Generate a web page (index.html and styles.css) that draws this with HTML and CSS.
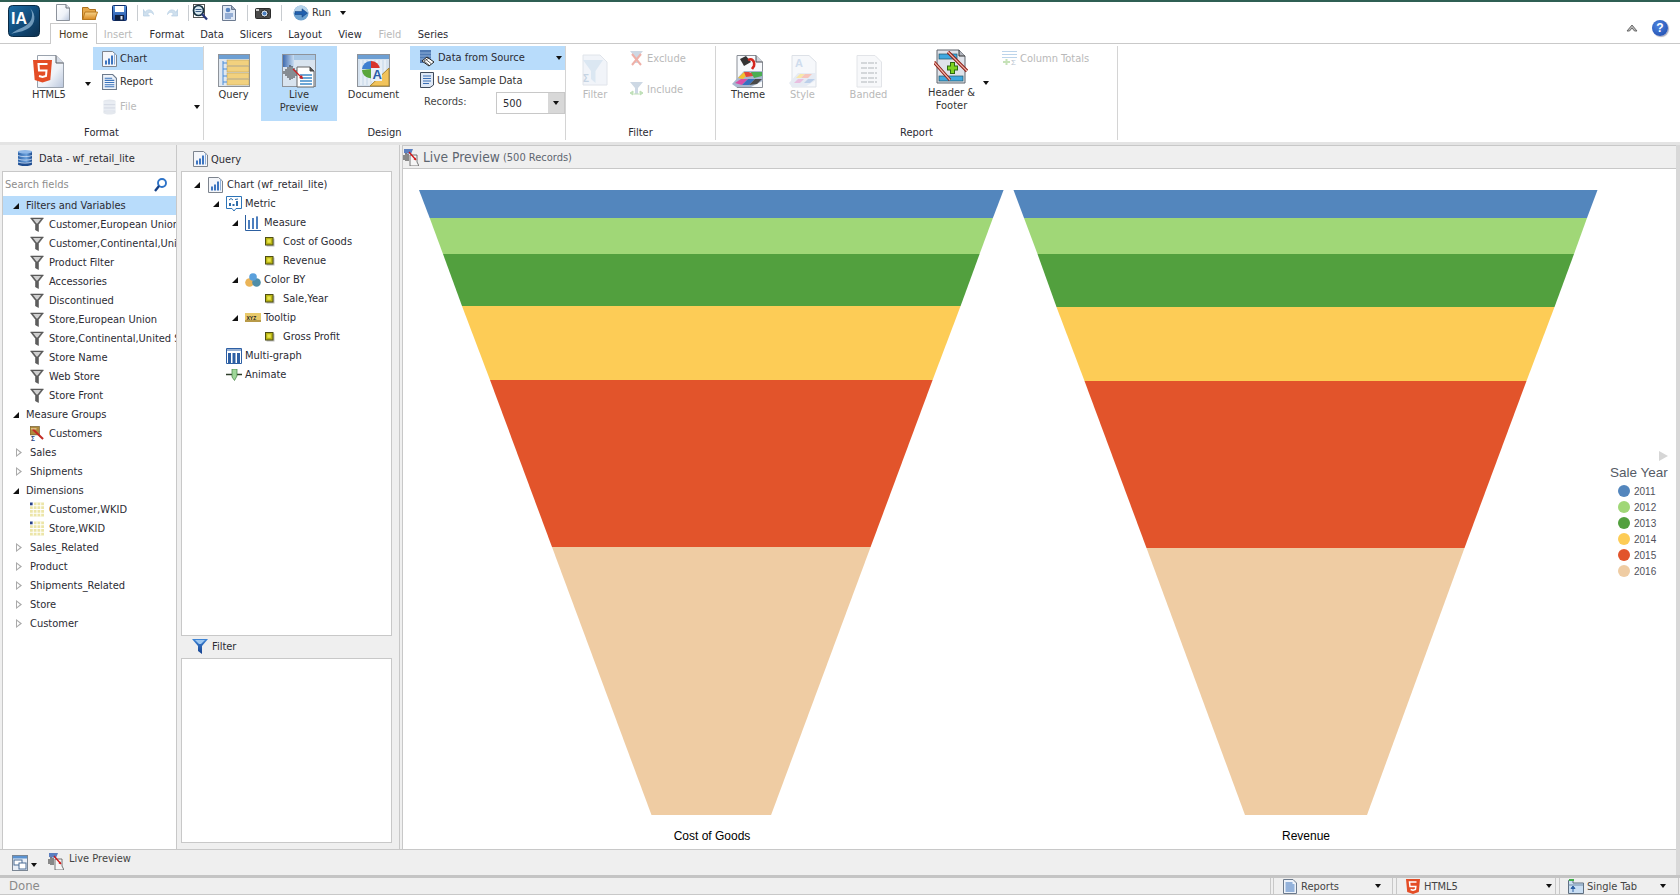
FILE: index.html
```html
<!DOCTYPE html>
<html lang="en">
<head>
<meta charset="utf-8">
<title>InfoAssist Live Preview</title>
<link rel="stylesheet" href="styles.css">
</head>
<body>
<svg class="defs" width="0" height="0" aria-hidden="true">
  <defs>
    <linearGradient id="gPage" x1="0" y1="0" x2="1" y2="1"><stop offset="0" stop-color="#fff"/><stop offset=".6" stop-color="#eef2f8"/><stop offset="1" stop-color="#b9c6dc"/></linearGradient>
    <linearGradient id="gLogo" x1="0" y1="0" x2="1" y2="1"><stop offset="0" stop-color="#1d6fa8"/><stop offset=".55" stop-color="#114a78"/><stop offset="1" stop-color="#0c2f4e"/></linearGradient>
    <linearGradient id="gFolder" x1="0" y1="0" x2="0" y2="1"><stop offset="0" stop-color="#f8d48c"/><stop offset="1" stop-color="#d98a22"/></linearGradient>
    <linearGradient id="gBlue" x1="0" y1="0" x2="0" y2="1"><stop offset="0" stop-color="#5c9ae0"/><stop offset="1" stop-color="#1c4aa0"/></linearGradient>
    <linearGradient id="gDb" x1="0" y1="0" x2="1" y2="0"><stop offset="0" stop-color="#2b62a8"/><stop offset=".6" stop-color="#6aa0dc"/><stop offset="1" stop-color="#1f4d90"/></linearGradient>
    <linearGradient id="gHead" x1="0" y1="0" x2="1" y2="0"><stop offset="0" stop-color="#3f6cb0"/><stop offset="1" stop-color="#c8ddf2"/></linearGradient>
    <linearGradient id="gFun" x1="0" y1="0" x2="0" y2="1"><stop offset="0" stop-color="#3f86d8"/><stop offset="1" stop-color="#15408e"/></linearGradient>

    <symbol id="i-new" viewBox="0 0 14 17"><path d="M.5.5H10L13.5 4V16.5H.5Z" fill="url(#gPage)" stroke="#8d939c"/><path d="M10 .5V4H13.5" fill="#dfe5ee" stroke="#6c7079"/></symbol>
    <symbol id="i-open" viewBox="0 0 16 17"><path d="M.5 3.5H6L7.5 5.5H13.5V15.5H.5Z" fill="#e6a84a" stroke="#ad6f1c"/><path d="M.8 15.5 3 8H15.5L13 15.5Z" fill="url(#gFolder)" stroke="#b9791f"/></symbol>
    <symbol id="i-save" viewBox="0 0 15 16"><rect x=".5" y=".5" width="14" height="15" rx="1" fill="url(#gBlue)" stroke="#0f2d6b"/><rect x="3" y="1" width="9" height="6" fill="#fff"/><rect x="3" y="10" width="9" height="5.5" fill="#10203f"/><rect x="8.500" y="11" width="2" height="3.5" fill="#dfe6f2"/></symbol>
    <symbol id="i-undo" viewBox="0 0 13 13"><path d="M3 6.500C5 2.500 11 3 11.500 8.500 10 6 7 5.500 5.500 8L7.500 10H1.500V3.500Z" fill="#cfe0ee" stroke="#b5cde2" stroke-width=".7"/></symbol>
    <symbol id="i-redo" viewBox="0 0 13 13"><path d="M10 6.500C8 2.500 2 3 1.500 8.500 3 6 6 5.500 7.500 8L5.500 10H11.500V3.500Z" fill="#cfe0ee" stroke="#b5cde2" stroke-width=".7"/></symbol>
    <symbol id="i-search" viewBox="0 0 16 17"><rect x="1.500" y=".5" width="11" height="13" fill="#fff" stroke="#555"/><circle cx="6.500" cy="6.500" r="5" fill="#d8e8f0" stroke="#14303f" stroke-width="1.700"/><path d="M3.500 5.500H9.500M3.500 7.500H9.500" stroke="#3c5f8a"/><path d="M10 10 15 15.500" stroke="#26367c" stroke-width="2.200"/></symbol>
    <symbol id="i-report" viewBox="0 0 14 16"><path d="M.5.5H9.500L13.500 4.500V15.500H.5Z" fill="#dfe8f5" stroke="#6c7a90"/><path d="M9.500.5V4.500H13.500" fill="#9aa8bc" stroke="#6c7a90"/><circle cx="6" cy="5" r="2.300" fill="#5b87c4"/><path d="M3 9H11M3 11H11M3 13H9" stroke="#4a74b4"/></symbol>
    <symbol id="i-camera" viewBox="0 0 16 12"><rect x=".5" y="1.500" width="15" height="10" rx="1" fill="#4a4a4a" stroke="#2b2b2b"/><rect x="1" y="2" width="3" height="2" fill="#d0d0d0"/><circle cx="9.500" cy="6.500" r="3.500" fill="#e6eef5" stroke="#222"/><circle cx="9.500" cy="6.500" r="2" fill="#4b7fc0"/></symbol>
    <symbol id="i-run" viewBox="0 0 16 16"><circle cx="8" cy="8" r="7.500" fill="#6aa0cf"/><path d="M8 .5A7.500 7.500 0 0 1 15.500 8H.5A7.500 7.500 0 0 1 8 .5Z" fill="#b6d3ea"/><path d="M2 6.500H9V3.800L14.500 8 9 12.200V9.500H2Z" fill="#1f5fae" stroke="#103d7a" stroke-width=".5"/></symbol>
    <symbol id="i-collapse" viewBox="0 0 12 10"><path d="M1 8 6 2 11 8 8.500 8 6 5 3.500 8Z" fill="#b9b9b9" stroke="#5d5d5d" stroke-width=".9"/></symbol>

    <symbol id="i-html5" viewBox="0 0 32 34"><path d="M4.500 1.500H23L30.500 9V33.500H4.500Z" fill="url(#gPage)" stroke="#9aa2ad"/><path d="M23 1.500V9H30.500" fill="#d6dce6" stroke="#55585f"/><path d="M0 6H19L17.300 26 9.500 28.500 1.700 26Z" fill="#e44d26"/><path d="M14.500 10H5.500L6 16.500H13.500L13 22 9.500 23 6 22" fill="none" stroke="#fff" stroke-width="2"/></symbol>
    <symbol id="i-chart" viewBox="0 0 15 16"><path d="M.5.5H10.500L14.500 4V15.500H.5Z" fill="#f4f6fa" stroke="#7d848e"/><path d="M3 9.500H5V13.500H3ZM6 7.500H8V13.500H6ZM9 4.500H11V13.500H9Z" fill="#3d75c0"/><path d="M12 2.500H13V13.500H12Z" fill="#8fb1dc"/></symbol>
    <symbol id="i-file" viewBox="0 0 14 17"><ellipse cx="7" cy="2.500" rx="6.500" ry="2" fill="#e4e8ee"/><rect x=".5" y="2.500" width="13" height="12" fill="#e9edf3"/><path d="M1 6H13M1 9.500H13M1 13H13" stroke="#d2d8e2"/><ellipse cx="7" cy="14.500" rx="6.500" ry="2" fill="#e4e8ee"/></symbol>
    <symbol id="i-query" viewBox="0 0 32 34"><rect x=".5" y=".5" width="31" height="32" fill="#dfe7f0" stroke="#8e939a"/><rect x="1" y="1" width="30" height="4" fill="#6d9fd3"/><rect x="9" y="6" width="22" height="5.500" fill="#f2d17e" stroke="#b59a58" stroke-width=".5"/><rect x="9" y="12.500" width="22" height="5.500" fill="#f2d17e" stroke="#b59a58" stroke-width=".5"/><rect x="9" y="19" width="22" height="5.500" fill="#f2d17e" stroke="#b59a58" stroke-width=".5"/><rect x="9" y="25.500" width="22" height="5.500" fill="#f2d17e" stroke="#b59a58" stroke-width=".5"/><path d="M5 7V31M5 9H9M5 15H9M5 22H9M5 28H9" stroke="#4a8dd8" fill="none"/></symbol>
    <symbol id="i-live" viewBox="0 0 34 34"><rect x=".5" y=".5" width="33" height="32" fill="#d9e4ef" stroke="#8e939a"/><rect x="1" y="1" width="32" height="5" fill="#a8c8e6"/><rect x="1" y="1" width="11" height="12" fill="url(#gHead)"/><path d="M2 17V20M4 15V22M6 13V24M8 11V26M10 12V25M12 14V24M14 16V22" stroke="#222" stroke-width=".9"/><path d="M15 13H28L32 17V33H15Z" fill="#fff" stroke="#666"/><path d="M28 13V17H32" fill="#555" stroke="#444"/><path d="M18 21H30M18 24H30M18 27H30M18 30H30" stroke="#3d89c8" stroke-width="1.500"/><path d="M11 15 20 24" stroke="#d02020" stroke-width="1.300"/><path d="M21 25 17 24 20 21Z" fill="#d02020"/></symbol>
    <symbol id="i-document" viewBox="0 0 33 34"><rect x=".5" y=".5" width="32" height="32" fill="#d5e2ef" stroke="#8e939a"/><rect x="1" y="1" width="31" height="4" fill="#6d9fd3"/><path d="M4 6V31M8 6V31M12 6V31M16 6V31M20 6V31M24 6V31M28 6V31" stroke="#e6eef6" stroke-width="2"/><path d="M14 15V7A9 9 0 0 1 23 15Z" fill="#d8342b"/><path d="M14 15H23A9 9 0 0 1 16 24Z" fill="#e8b73a"/><path d="M14 15 16 24A9 9 0 0 1 5 16Z" fill="#5aa63c"/><path d="M14 15H5A9 9 0 0 1 14 7Z" fill="#3f7fd0"/><path d="M13 32 32 14V32Z" fill="#f1c35b" stroke="#a8842f"/><rect x="14" y="14" width="11" height="13" fill="#e8f0f8"/><text x="15.500" y="25" class="svg-a">A</text></symbol>
    <symbol id="i-source" viewBox="0 0 16 18"><rect x="1" y="1" width="11" height="13" fill="#4f7bb5"/><path d="M1 4H12M1 7H12M1 10H12" stroke="#8fb0d8"/><path d="M3 12 8 8 15 13 10 17Z" fill="#fff" stroke="#222"/><path d="M5 12 10 16M7 10.500 12 14.500M5 12 10 9" stroke="#222" stroke-width=".7"/></symbol>
    <symbol id="i-sample" viewBox="0 0 14 16"><path d="M.5.5H13.500V13L10 15.500H.5Z" fill="#dfe8f5" stroke="#3f4a5a"/><path d="M3 4H11M3 6.500H11M3 9H11M3 11.500H9" stroke="#3b6fb5" stroke-width="1.100"/></symbol>
    <symbol id="i-filter-big" viewBox="0 0 28 34"><path d="M2 1H19L26 8V31H2Z" fill="#f1f4f9" stroke="#e0e4ea"/><path d="M2 6H22L14.500 17V29L10 25V17Z" fill="#dbe7f2"/><text x="2" y="28" class="svg-sigma">Σ</text></symbol>
    <symbol id="i-exclude" viewBox="0 0 15 16"><path d="M1 1H14L9 7V13H6V7Z" fill="#cdd8e4"/><path d="M3 4 12 15M12 4 3 15" stroke="#efb0a8" stroke-width="2"/></symbol>
    <symbol id="i-include" viewBox="0 0 15 16"><path d="M1 1H14L9 7V13H6V7Z" fill="#cdd8e4"/><path d="M1 12 4 10V14ZM14 12 11 10V14ZM5 13 H10" fill="#bfe0b8" stroke="#bfe0b8"/></symbol>
    <symbol id="i-theme" viewBox="0 0 32 34"><path d="M5 1.500H24L30.500 8V33.500H5Z" fill="#f7f9fc" stroke="#8a8f97"/><path d="M24 1.500V8H30.500" fill="#cfd4dc" stroke="#4a4d52"/><path d="M0 30 12 17H30.500V27L19 33 4 33Z" fill="#a8b8d0"/><path d="M6 24 12 18H18L11 25Z" fill="#f2c230"/><path d="M12 18H18L17 19 24 18 21 22 14 23Z" fill="#e2463c"/><path d="M19 18H30V22L22 24Z" fill="#4bae52"/><path d="M3 29 9 25H16L10 31Z" fill="#d84ea8"/><path d="M10 31 16 25H23L17 31Z" fill="#3670c0"/><path d="M17 31 23 25H30L25 30Z" fill="#4a4a4a"/><path d="M8 5 14 2 19 8 12 12Z" fill="#333"/><path d="M16 6C20 4 23 7 22 12L20 15" fill="none" stroke="#d4271e" stroke-width="2.500"/></symbol>
    <symbol id="i-style" viewBox="0 0 28 34"><path d="M3 1.500H20L27 8V33H3Z" fill="#f6f8fb" stroke="#dde1e7"/><text x="6" y="13" class="svg-style">A</text><path d="M0 29 9 19H27V26L16 33H3Z" fill="#e6ebf3"/><path d="M7 24 11 20H16L12 24Z" fill="#f8e7a8"/><path d="M16 20H23L19 24H12Z" fill="#f6c4bc"/><path d="M5 29 9 25H15L11 29Z" fill="#e8bfe0"/><path d="M15 29 19 25H26L21 29Z" fill="#bdd0ea"/></symbol>
    <symbol id="i-banded" viewBox="0 0 28 34"><path d="M2 1.500H20L26.500 8V33H2Z" fill="#f7f8fa" stroke="#e2e4e8"/><path d="M6 9H22M6 14H22M6 19H22M6 24H22M6 28H22" stroke="#c9ccd0" stroke-width="1.500" stroke-dasharray="6 1"/></symbol>
    <symbol id="i-header" viewBox="0 0 36 37"><path d="M3 1H25L31 7V34H3Z" fill="#dfe3ea" stroke="#5f646c"/><path d="M25 1V7H31" fill="#b0b4bc" stroke="#333"/><rect x="5" y="5" width="18" height="5" fill="#3fa8e0" stroke="#256" stroke-width=".7"/><rect x="5" y="27" width="24" height="5" fill="#3fa8e0" stroke="#256" stroke-width=".7"/><path d="M0 13 16 31M14 3 33 22" stroke="#8b1a14" stroke-width="3.200"/><path d="M0 13 16 31M14 3 33 22" stroke="#f2b6a8" stroke-width="1.200"/><path d="M13 19H24M18.500 13V25" stroke="#2c6b10" stroke-width="5"/><path d="M14 19H23M18.500 14V24" stroke="#7ed321" stroke-width="3"/></symbol>
    <symbol id="i-totals" viewBox="0 0 15 16"><path d="M0 1.500H15M0 4.500H15M0 7.500H15" stroke="#bcd4ea"/><path d="M1 12H8M4.500 9V15" stroke="#c6e2b8" stroke-width="2"/><text x="9" y="15" class="svg-sum">Σ</text></symbol>

    <symbol id="i-db" viewBox="0 0 14 16"><rect y="1.500" width="14" height="13" fill="url(#gDb)"/><ellipse cx="7" cy="1.800" rx="7" ry="1.800" fill="#8fb8e8"/><ellipse cx="7" cy="14.300" rx="7" ry="1.700" fill="#1f4d90"/><path d="M0 5.500C3 7 11 7 14 5.500M0 9C3 10.500 11 10.500 14 9M0 12C3 13.500 11 13.500 14 12" fill="none" stroke="#cfe0f5" stroke-width=".8"/></symbol>
    <symbol id="i-lens" viewBox="0 0 13 14"><circle cx="8" cy="5" r="4" fill="none" stroke="#2d73c8" stroke-width="1.900"/><path d="M5 8 1 13" stroke="#153f85" stroke-width="2.300"/></symbol>
    <symbol id="i-funnel" viewBox="0 0 14 15"><path d="M.5 1H13.500L8.500 7.500V14.500L5.500 13V7.500Z" fill="#5d5d5d" stroke="#4c4c4c" stroke-width=".5"/><path d="M3 2H11L7.500 6.500H6.500Z" fill="#d0d0d0"/></symbol>
    <symbol id="i-customers" viewBox="0 0 15 15"><rect x="0" y="0" width="10" height="9" fill="#b08a3c" stroke="#5c4717" stroke-width=".6"/><path d="M3 3 14 13.500" stroke="#c22a24" stroke-width="2.200"/><path d="M1 2.500H7" stroke="#f4e0ac"/><text x="1" y="15" class="svg-mini">Σ</text></symbol>
    <symbol id="i-grid" viewBox="0 0 15 15"><path d="M0 0H3V3H0Z" fill="#27408b"/><path d="M4 0H15V3H4ZM0 4H15V7H0ZM0 8H15V11H0ZM0 12H15V15H0Z" fill="#ece5a8"/><path d="M3.500 0V15M7.500 0V15M11.500 0V15" stroke="#fff"/></symbol>
    <symbol id="i-metric" viewBox="0 0 16 16"><path d="M.5.5H15.500V12.500H10L8 15 6 12.500H.5Z" fill="#fff" stroke="#2d74b8"/><path d="M3 10V7H5V10ZM10 10V5H12V10ZM6.500 10V8H8.500V10Z" fill="#2d6ba8"/><path d="M3 4 5 2.500 7 4M9 3.500 12 3" stroke="#2d6ba8" fill="none"/></symbol>
    <symbol id="i-measure" viewBox="0 0 16 16"><path d="M.5 0V15.500H16" fill="none" stroke="#2c5fa0"/><path d="M3 5H5V14H3ZM7 3H9V14H7ZM11 1.500H13V14H11Z" fill="#2d5fa4"/><path d="M4 5V14M8 3V14M12 2V14" stroke="#6f9fd8"/></symbol>
    <symbol id="i-colorby" viewBox="0 0 16 14"><circle cx="4.500" cy="9.500" r="4.300" fill="#eab458"/><circle cx="11.500" cy="9.500" r="4.300" fill="#4f8ea8"/><circle cx="8" cy="4" r="3.800" fill="#5aa0dc"/></symbol>
    <symbol id="i-tooltip" viewBox="0 0 16 9"><rect width="16" height="9" fill="#e8c96a"/><rect y="7" width="16" height="2" fill="#b89a48"/><text x="1.500" y="6.800" class="svg-xyz">XYZ</text></symbol>
    <symbol id="i-multi" viewBox="0 0 16 16"><path d="M.5.500H15.500V15.500H.5Z" fill="#fff" stroke="#2d5fa4"/><path d="M2 5H5V15H2ZM6.500 5H9.500V15H6.500ZM11 5H14V15H11Z" fill="#2d5fa4"/><path d="M.5 2H15.500" stroke="#2d5fa4"/></symbol>
    <symbol id="i-animate" viewBox="0 0 16 12"><path d="M0 5.500H16" stroke="#2f3e2a" stroke-width="1.500"/><path d="M6 0H11V7L8.500 11.500 6 8Z" fill="#9fd79a" stroke="#3f7f3f" stroke-width=".7"/></symbol>
    <symbol id="i-field" viewBox="0 0 10 10"><rect x="1.500" y="1.500" width="8" height="8" fill="#bcbcbc"/><rect x=".5" y=".5" width="7.500" height="7.500" fill="#b8b414" stroke="#4f4f14"/><rect x="2.300" y="2.300" width="3.500" height="3.500" fill="#e8e44a"/></symbol>
    <symbol id="i-filter-blue" viewBox="0 0 16 15"><path d="M0 0H16L10 7V15L6 12V7Z" fill="url(#gFun)"/><path d="M3 1H13L9 5H7Z" fill="#9cc7f2"/></symbol>
    <symbol id="i-hand" viewBox="0 0 16 17"><path d="M1 0H10L8 5 1 4Z" fill="#5b7fc0"/><path d="M1 6V11M3 4V12M5 5V12" stroke="#333" stroke-width="1.100"/><path d="M7 6H14V13L16 17H7Z" fill="#f6f6f6" stroke="#555" stroke-width=".8"/><path d="M6 3 13 11" stroke="#d01818" stroke-width="1.300"/><path d="M13 11 10.500 10.500 12.500 8.500Z" fill="#d01818"/></symbol>
    <symbol id="i-windows" viewBox="0 0 16 16"><rect x=".5" y=".5" width="15" height="15" fill="#e8eef6" stroke="#7a8694"/><rect x="1" y="1" width="14" height="2.500" fill="#5a92d0"/><rect x="2" y="5" width="8" height="5" fill="#fff" stroke="#4a6d96"/><rect x="7" y="8" width="7" height="6" fill="#fff" stroke="#4a6d96"/></symbol>
    <symbol id="i-reports" viewBox="0 0 14 15"><path d="M.5.500H10L13.500 4V14.500H.5Z" fill="#eef3fa" stroke="#6c7a8c"/><path d="M2.500 4H9.500M2.500 6H11.500M2.500 8H11.500M2.500 10H11.500M2.500 12H11.500" stroke="#3a73bc"/></symbol>
    <symbol id="i-html5-small" viewBox="0 0 14 15"><path d="M0 0H14L12.800 13 7 15 1.200 13Z" fill="#e44d26"/><path d="M10.500 3H3.500L4 7.500H9.800L9.400 10.500 7 11.300 4.600 10.500" fill="none" stroke="#fff" stroke-width="1.500"/></symbol>
    <symbol id="i-tab" viewBox="0 0 16 15"><path d="M.5 1.500H5V4H15.500V14.500H.5Z" fill="#c9def3" stroke="#5f6f80"/><rect x="1" y="0" width="5" height="2" fill="#42b14a"/><path d="M5 13V9M3 9.500H7L5 7Z" stroke="#2c5fa4" fill="#2c5fa4"/><path d="M.5 6H15.500" stroke="#6f8aa6"/></symbol>
  </defs>
</svg>

<div class="topline"></div>

<header class="qat">
  <svg class="logo" viewBox="0 0 32 32"><rect x=".5" y=".5" width="31" height="31" rx="4" fill="url(#gLogo)" stroke="#0a2a44"/><path d="M3 29C10 23 20 22 23 15 25 10 24 6 22 3 29 10 27 19 21 23 15 27 9 27 3 29Z" fill="#8fb6d4" opacity=".75"/><text x="3" y="19" class="svg-ia">IA</text></svg>
  <svg class="ic w14 h17 ml56"><use href="#i-new"/></svg>
  <svg class="ic w16 h17 ml12"><use href="#i-open"/></svg>
  <svg class="ic w15 h16 ml14"><use href="#i-save"/></svg>
  <span class="qsep ml10"></span>
  <svg class="ic w13 h13 ml4"><use href="#i-undo"/></svg>
  <svg class="ic w13 h13 ml11"><use href="#i-redo"/></svg>
  <span class="qsep ml9"></span>
  <svg class="ic w16 h17 ml3"><use href="#i-search"/></svg>
  <svg class="ic w14 h16 ml14"><use href="#i-report"/></svg>
  <span class="qsep ml11"></span>
  <svg class="ic w16 h12 ml7"><use href="#i-camera"/></svg>
  <span class="qsep ml10"></span>
  <svg class="ic w16 h16 ml11"><use href="#i-run"/></svg>
  <span class="qrun">Run</span>
  <span class="caret qcaret"></span>
</header>

<nav class="tabs">
  <span class="tab tab-home">Home</span>
  <span class="tab off t42">Insert</span>
  <span class="tab t56">Format</span>
  <span class="tab t34">Data</span>
  <span class="tab t54">Slicers</span>
  <span class="tab t44">Layout</span>
  <span class="tab t46">View</span>
  <span class="tab off t34">Field</span>
  <span class="tab t52">Series</span>
  <span class="tabs-right">
    <svg class="ic w12 h10"><use href="#i-collapse"/></svg>
    <span class="help">?</span>
  </span>
</nav>

<section class="ribbon">
  <div class="group g-format">
    <div class="gbody">
      <div class="big b-html5"><svg class="bigic w32"><use href="#i-html5"/></svg><span>HTML5</span></div>
      <span class="caret big-caret"></span>
      <div class="stack s-format">
        <div class="rrow sel"><svg class="ic w15 h16"><use href="#i-chart"/></svg><span>Chart</span></div>
        <div class="rrow"><svg class="ic w15 h16"><use href="#i-reports"/></svg><span>Report</span></div>
        <div class="rrow off mt2"><svg class="ic w15 h16"><use href="#i-file"/></svg><span>File</span><span class="caret row-caret"></span></div>
      </div>
    </div>
    <div class="glabel">Format</div>
  </div>

  <div class="group g-design">
    <div class="gbody">
      <div class="big b-query"><svg class="bigic w32"><use href="#i-query"/></svg><span>Query</span></div>
      <div class="big b-live sel"><svg class="bigic w34"><use href="#i-live"/></svg><span>Live<br>Preview</span></div>
      <div class="big b-doc"><svg class="bigic w33"><use href="#i-document"/></svg><span>Document</span></div>
      <div class="stack s-data">
        <div class="rrow sel tall"><svg class="ic w16 h18"><use href="#i-source"/></svg><span>Data from Source</span><span class="caret row-caret"></span></div>
        <div class="rrow short"><svg class="ic w14 h16 ml1"><use href="#i-sample"/></svg><span>Use Sample Data</span></div>
        <div class="records">
          <span class="rec-label">Records:</span>
          <div class="combo"><span class="combo-val">500</span><span class="combo-btn"><span class="caret"></span></span></div>
        </div>
      </div>
    </div>
    <div class="glabel">Design</div>
  </div>

  <div class="group g-filter">
    <div class="gbody">
      <div class="big b-filter off"><svg class="bigic w28"><use href="#i-filter-big"/></svg><span>Filter</span></div>
      <div class="stack s-filter">
        <div class="rrow off tall"><svg class="ic w15 h16"><use href="#i-exclude"/></svg><span>Exclude</span></div>
        <div class="rrow off tall mt7"><svg class="ic w15 h16"><use href="#i-include"/></svg><span>Include</span></div>
      </div>
    </div>
    <div class="glabel">Filter</div>
  </div>

  <div class="group g-report">
    <div class="gbody">
      <div class="big b-theme"><svg class="bigic w32"><use href="#i-theme"/></svg><span>Theme</span></div>
      <div class="big b-style off"><svg class="bigic w28"><use href="#i-style"/></svg><span>Style</span></div>
      <div class="big b-banded off"><svg class="bigic w28"><use href="#i-banded"/></svg><span>Banded</span></div>
      <div class="big b-header"><svg class="headic"><use href="#i-header"/></svg><span>Header &amp;<br>Footer</span><span class="caret head-caret"></span></div>
      <div class="stack s-totals">
        <div class="rrow off tall"><svg class="ic w15 h16"><use href="#i-totals"/></svg><span>Column Totals</span></div>
      </div>
    </div>
    <div class="glabel">Report</div>
  </div>
</section>
<div class="band"></div>

<div class="mainwrap">
  <main class="workspace">
    <aside class="pane-data">
      <div class="phead ph-data"><svg class="ic w14 h16"><use href="#i-db"/></svg><span>Data - wf_retail_lite</span></div>
      <div class="databox">
        <div class="searchrow"><span>Search fields</span><svg class="ic w13 h14"><use href="#i-lens"/></svg></div>
        <div class="row r-open sel"><span class="tri-open"></span><span>Filters and Variables</span></div>
        <div class="row r-field"><svg class="ic w14 h15"><use href="#i-funnel"/></svg><span>Customer,European Union</span></div>
        <div class="row r-field"><svg class="ic w14 h15"><use href="#i-funnel"/></svg><span>Customer,Continental,United States</span></div>
        <div class="row r-field"><svg class="ic w14 h15"><use href="#i-funnel"/></svg><span>Product Filter</span></div>
        <div class="row r-field"><svg class="ic w14 h15"><use href="#i-funnel"/></svg><span>Accessories</span></div>
        <div class="row r-field"><svg class="ic w14 h15"><use href="#i-funnel"/></svg><span>Discontinued</span></div>
        <div class="row r-field"><svg class="ic w14 h15"><use href="#i-funnel"/></svg><span>Store,European Union</span></div>
        <div class="row r-field"><svg class="ic w14 h15"><use href="#i-funnel"/></svg><span>Store,Continental,United States</span></div>
        <div class="row r-field"><svg class="ic w14 h15"><use href="#i-funnel"/></svg><span>Store Name</span></div>
        <div class="row r-field"><svg class="ic w14 h15"><use href="#i-funnel"/></svg><span>Web Store</span></div>
        <div class="row r-field"><svg class="ic w14 h15"><use href="#i-funnel"/></svg><span>Store Front</span></div>
        <div class="row r-open"><span class="tri-open"></span><span>Measure Groups</span></div>
        <div class="row r-field"><svg class="ic w14 h15"><use href="#i-customers"/></svg><span>Customers</span></div>
        <div class="row r-closed"><span class="tri-closed"></span><span>Sales</span></div>
        <div class="row r-closed"><span class="tri-closed"></span><span>Shipments</span></div>
        <div class="row r-open"><span class="tri-open"></span><span>Dimensions</span></div>
        <div class="row r-field"><svg class="ic w14 h15"><use href="#i-grid"/></svg><span>Customer,WKID</span></div>
        <div class="row r-field"><svg class="ic w14 h15"><use href="#i-grid"/></svg><span>Store,WKID</span></div>
        <div class="row r-closed"><span class="tri-closed"></span><span>Sales_Related</span></div>
        <div class="row r-closed"><span class="tri-closed"></span><span>Product</span></div>
        <div class="row r-closed"><span class="tri-closed"></span><span>Shipments_Related</span></div>
        <div class="row r-closed"><span class="tri-closed"></span><span>Store</span></div>
        <div class="row r-closed"><span class="tri-closed"></span><span>Customer</span></div>
      </div>
    </aside>

    <aside class="pane-query">
      <div class="phead ph-query"><svg class="ic w15 h16"><use href="#i-chart"/></svg><span>Query</span></div>
      <div class="qbox">
        <div class="row q0"><span class="tri-open"></span><svg class="ic w15 h16"><use href="#i-chart"/></svg><span>Chart (wf_retail_lite)</span></div>
        <div class="row q1"><span class="tri-open"></span><svg class="ic w16 h16"><use href="#i-metric"/></svg><span>Metric</span></div>
        <div class="row q2"><span class="tri-open"></span><svg class="ic w16 h16"><use href="#i-measure"/></svg><span>Measure</span></div>
        <div class="row q3"><svg class="ic w10 h10"><use href="#i-field"/></svg><span>Cost of Goods</span></div>
        <div class="row q3"><svg class="ic w10 h10"><use href="#i-field"/></svg><span>Revenue</span></div>
        <div class="row q2"><span class="tri-open"></span><svg class="ic w16 h14"><use href="#i-colorby"/></svg><span>Color BY</span></div>
        <div class="row q3"><svg class="ic w10 h10"><use href="#i-field"/></svg><span>Sale,Year</span></div>
        <div class="row q2"><span class="tri-open"></span><svg class="ic w16 h9"><use href="#i-tooltip"/></svg><span>Tooltip</span></div>
        <div class="row q3"><svg class="ic w10 h10"><use href="#i-field"/></svg><span>Gross Profit</span></div>
        <div class="row q1 noarrow"><svg class="ic w16 h16"><use href="#i-multi"/></svg><span>Multi-graph</span></div>
        <div class="row q1 noarrow"><svg class="ic w16 h12"><use href="#i-animate"/></svg><span>Animate</span></div>
      </div>
      <div class="phead ph-filter"><svg class="ic w16 h15"><use href="#i-filter-blue"/></svg><span>Filter</span></div>
      <div class="fbox"></div>
    </aside>

    <section class="preview">
      <div class="pvhead"><svg class="ic w16 h17"><use href="#i-hand"/></svg><span class="pvtitle">Live Preview</span><span class="pvcount">(500 Records)</span></div>
      <div class="chart">
        <figure class="funnel">
          <svg class="fsvg" viewBox="0 0 594 625">
            <polygon class="c1" points="4,0 588.6,0 577.9,28 14.7,28"/>
            <polygon class="c2" points="14.7,28 577.9,28 564.6,64 28,64"/>
            <polygon class="c3" points="28,64 564.6,64 545.6,116 47,116"/>
            <polygon class="c4" points="47,116 545.6,116 517.6,190 75,190"/>
            <polygon class="c5" points="75,190 517.6,190 455.6,357 137,357"/>
            <polygon class="c6" points="137,357 455.6,357 356.1,625 236.5,625"/>
          </svg>
          <figcaption>Cost of Goods</figcaption>
        </figure>
        <figure class="funnel">
          <svg class="fsvg" viewBox="0 0 594 625">
            <polygon class="c1" points="4.500,0 588.5,0 578,28 15,28"/>
            <polygon class="c2" points="15,28 578,28 565,64 28.500,64"/>
            <polygon class="c3" points="28.500,64 565,64 545.500,117 47.500,117"/>
            <polygon class="c4" points="47.500,117 545.500,117 517.500,191 75.500,191"/>
            <polygon class="c5" points="75.500,191 517.500,191 455.500,358 137.500,358"/>
            <polygon class="c6" points="137.500,358 455.500,358 358,625 236,625"/>
          </svg>
          <figcaption>Revenue</figcaption>
        </figure>
        <div class="legend">
          <span class="lg-arrow"></span>
          <div class="lg-title">Sale Year</div>
          <div class="lg-item"><span class="dot d1"></span>2011</div>
          <div class="lg-item"><span class="dot d2"></span>2012</div>
          <div class="lg-item"><span class="dot d3"></span>2013</div>
          <div class="lg-item"><span class="dot d4"></span>2014</div>
          <div class="lg-item"><span class="dot d5"></span>2015</div>
          <div class="lg-item"><span class="dot d6"></span>2016</div>
        </div>
      </div>
    </section>
  </main>
  <div class="doctabs">
    <svg class="ic w16 h16"><use href="#i-windows"/></svg>
    <span class="caret dt-caret"></span>
    <svg class="ic w16 h17 dt-hand"><use href="#i-hand"/></svg>
    <span class="dt-label">Live Preview</span>
  </div>
</div>

<footer class="status">
  <div class="st-done">Done</div>
  <div class="st-seg st-reports"><svg class="ic w14 h15"><use href="#i-reports"/></svg><span>Reports</span><span class="caret st-caret"></span></div>
  <div class="st-seg st-html"><svg class="ic w14 h15"><use href="#i-html5-small"/></svg><span>HTML5</span><span class="caret st-caret"></span></div>
  <div class="st-seg st-tab"><svg class="ic w16 h15"><use href="#i-tab"/></svg><span>Single Tab</span><span class="caret st-caret"></span></div>
</footer>
</body>
</html>
```
FILE: styles.css
```css
* { box-sizing: border-box; }
html, body { margin: 0; padding: 0; }
body {
  position: relative;
  width: 1680px;
  height: 895px;
  overflow: hidden;
  display: flex;
  flex-direction: column;
  background: #fff;
  color: #2b2b33;
  font-family: "DejaVu Sans Condensed", "DejaVu Sans", sans-serif;
  font-stretch: condensed;
  font-size: 11px;
}
.defs { position: absolute; }
svg { display: block; flex: none; }
.ic { flex: none; }
.w10 { width: 10px; } .w12 { width: 12px; } .w13 { width: 13px; } .w14 { width: 14px; }
.w15 { width: 15px; } .w16 { width: 16px; }
.w28 { width: 28px; } .w32 { width: 32px; } .w33 { width: 33px; } .w34 { width: 34px; }
.h9 { height: 9px; } .h10 { height: 10px; } .h12 { height: 12px; } .h13 { height: 13px; }
.h14 { height: 14px; } .h15 { height: 15px; } .h16 { height: 16px; } .h17 { height: 17px; } .h18 { height: 18px; }
.ml1 { margin-left: 1px; } .ml3 { margin-left: 3px; } .ml4 { margin-left: 4px; } .ml7 { margin-left: 7px; }
.ml9 { margin-left: 9px; } .ml10 { margin-left: 10px; } .ml11 { margin-left: 11px; } .ml12 { margin-left: 12px; }
.ml14 { margin-left: 14px; } .ml56 { margin-left: 56px; }
.mt2 { margin-top: 2px; }
.mt7 { margin-top: 7px; }

.svg-ia { font: bold 16px "Liberation Sans", sans-serif; fill: #fff; }
.svg-a { font: bold 13px "Liberation Sans", sans-serif; fill: #2a5ca8; }
.svg-sigma { font: bold 10px "Liberation Sans", sans-serif; fill: #c5d3e2; }
.svg-style { font: bold 11px "Liberation Sans", sans-serif; fill: #cfdced; }
.svg-sum { font: 8px "Liberation Sans", sans-serif; fill: #b8c4d0; }
.svg-mini { font: bold 7px "Liberation Sans", sans-serif; fill: #1f3f80; }
.svg-xyz { font: bold 5px "Liberation Sans", sans-serif; fill: #222; }

.caret {
  display: inline-block;
  flex: none;
  width: 0;
  height: 0;
  border-left: 3.5px solid transparent;
  border-right: 3.5px solid transparent;
  border-top: 4px solid #111;
}

.topline { height: 2px; background: #2f5f54; flex: none; }

/* quick access */
.qat { display: flex; align-items: center; height: 21px; flex: none; }
.logo { position: absolute; left: 8px; top: 5px; width: 32px; height: 32px; }
.qsep { display: block; width: 1px; height: 16px; background: #c8ccd0; flex: none; }
.qrun { margin-left: 3px; color: #333; }
.qcaret { margin-left: 9px; }

/* tabs */
.tabs { display: flex; height: 21px; flex: none; padding-left: 50px; border-bottom: 1px solid #c9c9c9; }
.tab { display: block; height: 20px; line-height: 23px; text-align: center; color: #2b2b33; }
.off { color: #b9b9b9; }
.tab-home { width: 47px; height: 21px; border: 1px solid #c9c9c9; border-bottom: 0; background: #fff; color: #4a3a20; line-height: 21px; position: relative; z-index: 1; }
.t34 { width: 34px; } .t42 { width: 42px; } .t44 { width: 44px; } .t46 { width: 46px; } .t52 { width: 52px; } .t54 { width: 54px; } .t56 { width: 56px; }
.tabs-right { margin-left: auto; margin-top: -4px; display: flex; align-items: center; gap: 14px; padding-right: 12px; height: 18px; }
.help {
  width: 16px; height: 16px; border-radius: 50%;
  background: radial-gradient(circle at 40% 35%, #4f86e0, #1a45a8);
  box-shadow: 1px 1px 1px #aab;
  color: #fff; font: bold 12px/16px "Liberation Sans", sans-serif; text-align: center;
}

/* ribbon */
.ribbon { display: flex; height: 98px; flex: none; padding-top: 2px; }
.group { height: 94px; border-right: 1px solid #d4d4d4; display: flex; flex-direction: column; flex: none; }
.g-format { width: 204px; }
.g-design { width: 362px; }
.g-filter { width: 150px; }
.g-report { width: 402px; }
.gbody { display: flex; height: 76px; }
.glabel { height: 18px; line-height: 22px; text-align: center; color: #2b2b33; }
.big { display: flex; flex-direction: column; align-items: center; flex: none; padding-top: 8px; line-height: 14px; text-align: center; color: #333; position: relative; }
.bigic { height: 34px; }
.off.big { color: #b9b9b9; }
.sel { background: #b8dcfb; }
.b-html5 { width: 70px; margin-left: 14px; }
.big-caret { margin: 36px 0 0 1px; }
.s-format { width: 110px; margin: 1px 0 0 2px; }
.b-query { width: 55px; margin-left: 2px; }
.b-live { width: 76px; height: 75px; line-height: 13px; }
.b-doc { width: 73px; }
.s-data { width: 155px; }
.rrow { display: flex; align-items: center; height: 23px; padding-left: 9px; gap: 3px; color: #333; }
.rrow.off { color: #b9b9b9; }
.rrow.sel { color: #2b2b33; }
.tall { height: 24px; }
.short { height: 20px; padding-left: 8px; }
.s-data .rrow { padding-left: 9px; }
.s-data .tall { padding-bottom: 1px; }
.row-caret { margin-left: auto; margin-right: 3px; }
.records { display: flex; align-items: flex-start; padding-left: 14px; height: 24px; padding-top: 2px; }
.rec-label { width: 72px; line-height: 20px; color: #444; }
.combo { width: 69px; height: 22px; border: 1px solid #c8c8c8; display: flex; background: #fff; }
.combo-val { flex: 1; line-height: 21px; padding-left: 6px; }
.combo-btn { width: 16px; background: #d8d8d8; display: flex; align-items: center; justify-content: center; }
.b-filter { width: 58px; }
.s-filter .rrow { padding-left: 5px; }
.b-theme { width: 62px; margin-left: 1px; }
.b-style { width: 47px; }
.b-banded { width: 85px; }
.b-header { width: 78px; padding: 3px 0 0 3px; line-height: 13px; }
.headic { width: 36px; height: 37px; }
.head-caret { position: absolute; left: 72px; top: 35px; }
.s-totals .rrow { padding-left: 13px; }

.band { height: 3px; flex: none; background: #e4e4e4; }

/* workspace */
.mainwrap { display: flex; flex-direction: column; height: 730px; flex: none; border-right: 4px solid #d8d8d8; background: #efefef; }
.workspace { display: flex; height: 705px; flex: none; border-bottom: 1px solid #c8c8c8; }
.pane-data { width: 177px; flex: none; border-right: 1px solid #c8c8c8; display: flex; flex-direction: column; padding-left: 2px; }
.phead { display: flex; align-items: center; height: 26px; flex: none; gap: 7px; }
.ph-data { padding-left: 16px; }
.ph-query { padding-left: 12px; gap: 3px; padding-top: 2px; }
.ph-filter { height: 22px; padding: 0 0 2px 11px; gap: 4px; }
.databox { flex: 1; background: #fff; border-left: 1px solid #c8c8c8; border-top: 1px solid #c8c8c8; overflow: hidden; }
.searchrow { display: flex; align-items: center; justify-content: space-between; height: 24px; padding: 1px 9px 0 2px; color: #8d8d8d; }
.row { display: flex; align-items: center; height: 19px; white-space: nowrap; overflow: hidden; }
.r-open { padding-left: 10px; gap: 7px; }
.r-field { padding-left: 27px; gap: 5px; }
.r-closed { padding-left: 13px; gap: 8px; }
.tri-open {
  width: 0; height: 0; flex: none;
  border-style: solid; border-width: 0 0 6px 6px;
  border-color: transparent transparent #111 transparent;
}
.tri-closed {
  width: 6px; height: 9px; flex: none;
  background: #aaa;
  clip-path: polygon(0 0, 100% 50%, 0 100%, 0 0, 1px 2px, 1px calc(100% - 2px), calc(100% - 2px) 50%, 1px 2px);
}
.pane-query { width: 223px; flex: none; border-right: 1px solid #c8c8c8; display: flex; flex-direction: column; padding: 0 7px 6px 4px; }
.qbox { height: 465px; flex: none; background: #fff; border: 1px solid #c8c8c8; padding-top: 3px; }
.fbox { flex: 1; background: #fff; border: 1px solid #c8c8c8; }
.q0 { padding-left: 12px; gap: 8px; }
.q1 { padding-left: 31px; gap: 7px; }
.q2 { padding-left: 50px; gap: 7px; }
.q3 { padding-left: 83px; gap: 8px; }
.q0 .ic + span { margin-left: -4px; }
.q1 .ic + span, .q2 .ic + span { margin-left: -4px; }
.noarrow { padding-left: 44px; gap: 3px; }
.noarrow .ic + span { margin-left: 0; }

.preview { flex: 1; margin-left: 2px; display: flex; flex-direction: column; border-left: 1px solid #c8c8c8; border-top: 1px solid #c8c8c8; }
.pvhead { display: flex; align-items: center; height: 23px; flex: none; border-bottom: 1px solid #c8c8c8; }
.pvtitle { margin-left: 4px; font-size: 13.7px; color: #5e6670; }
.pvcount { margin-left: 3px; font-size: 11px; color: #5e6670; }
.chart { flex: 1; background: #fff; display: flex; padding: 21px 0 0 12px; }
.funnel { margin: 0; width: 594px; flex: none; font: 12px/14px "Liberation Sans", Arial, sans-serif; color: #000; text-align: center; }
.fsvg { width: 594px; height: 625px; }
.funnel figcaption { margin-top: 14px; }
.c1 { fill: #5386bd; } .c2 { fill: #a0d777; } .c3 { fill: #52a03e; }
.c4 { fill: #fdcc56; } .c5 { fill: #e2542b; } .c6 { fill: #efcca3; }
.legend { width: 73px; flex: none; padding-top: 261px; font-family: "Liberation Sans", Arial, sans-serif; color: #555; display: flex; flex-direction: column; }
.lg-arrow { align-self: flex-end; margin-right: 8px; width: 0; height: 0; border-top: 5px solid transparent; border-bottom: 5px solid transparent; border-left: 9px solid #d6d6d6; }
.lg-title { margin: 3px 0 1px 7px; font-size: 13.500px; line-height: 18px; white-space: nowrap; color: #555b66; }
.lg-item { display: flex; align-items: center; gap: 4px; height: 16px; padding-left: 15px; font-size: 10px; color: #50505a; }
.dot { width: 12px; height: 12px; border-radius: 50%; flex: none; }
.d1 { background: #5386bd; } .d2 { background: #a0d777; } .d3 { background: #52a03e; }
.d4 { background: #fdcc56; } .d5 { background: #e2542b; } .d6 { background: #efcca3; }

.doctabs { display: flex; align-items: flex-start; height: 25px; flex: none; padding: 5px 0 0 12px; }
.dt-caret { margin: 8px 0 0 3px; }
.dt-hand { margin: -2px 0 0 11px; }
.dt-label { margin-left: 5px; line-height: 8px; color: #444; }

/* status bar */
.status { display: flex; height: 20px; flex: none; background: #efefef; border-top: 3px solid #c4c4c4; border-bottom: 1px solid #c8c8c8; }
.st-done { width: 1271px; border-right: 1px solid #c8c8c8; padding-left: 9px; font-size: 13px; line-height: 16px; color: #8a8a8a; flex: none; }
.st-seg { display: flex; align-items: center; flex: none; border-left: 1px solid #c8c8c8; border-right: 1px solid #c8c8c8; gap: 4px; color: #444; }
.st-reports { width: 120px; margin-left: 2px; padding-left: 9px; }
.st-html { width: 160px; margin-left: 3px; padding-left: 9px; }
.st-tab { width: 120px; margin-left: 3px; padding-left: 8px; gap: 3px; }
.st-caret { margin-left: auto; margin-right: 11px; }
.st-html .st-caret { margin-right: 3px; }
.st-tab .st-caret { margin-right: 12px; }
```
